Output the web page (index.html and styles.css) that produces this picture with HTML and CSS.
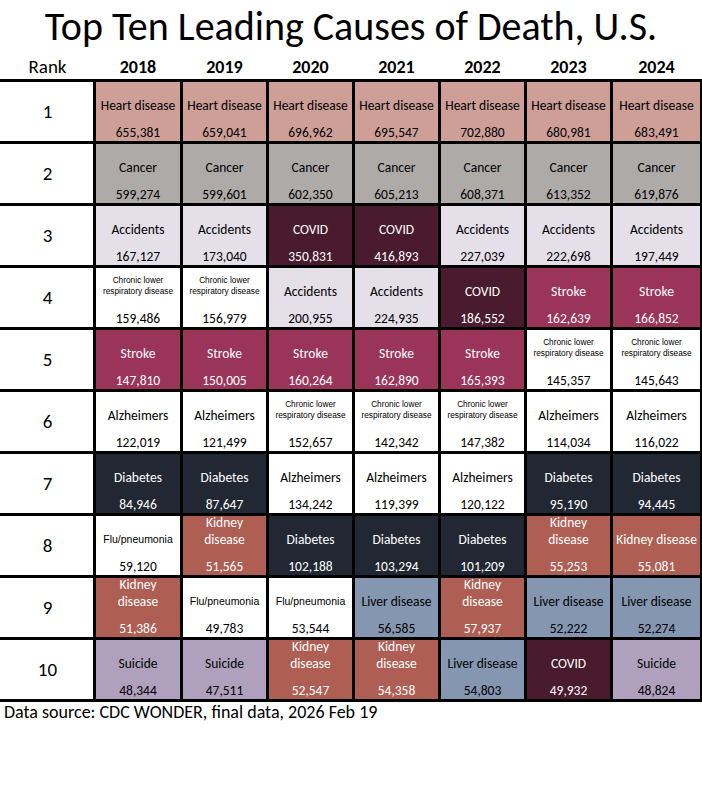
FILE: index.html
```html
<!DOCTYPE html>
<html lang="en">
<head>
<meta charset="utf-8">
<title>Top Ten Leading Causes of Death, U.S.</title>
<link rel="stylesheet" href="styles.css">
</head>
<body>
<div class="page">
  <h1 class="title">Top Ten Leading Causes of Death, U.S.</h1>
  <div class="head">
    <div class="rank-h">Rank</div>
    <div class="year">2018</div>
    <div class="year">2019</div>
    <div class="year">2020</div>
    <div class="year">2021</div>
    <div class="year">2022</div>
    <div class="year">2023</div>
    <div class="year">2024</div>
  </div>
  <div class="grid">
    <!-- 1 -->
    <div class="rank">1</div>
    <div class="cell heart"><div class="name">Heart disease</div><div class="num">655,381</div></div>
    <div class="cell heart"><div class="name">Heart disease</div><div class="num">659,041</div></div>
    <div class="cell heart"><div class="name">Heart disease</div><div class="num">696,962</div></div>
    <div class="cell heart"><div class="name">Heart disease</div><div class="num">695,547</div></div>
    <div class="cell heart"><div class="name">Heart disease</div><div class="num">702,880</div></div>
    <div class="cell heart"><div class="name">Heart disease</div><div class="num">680,981</div></div>
    <div class="cell heart"><div class="name">Heart disease</div><div class="num">683,491</div></div>
    <!-- 2 -->
    <div class="rank">2</div>
    <div class="cell cancer"><div class="name">Cancer</div><div class="num">599,274</div></div>
    <div class="cell cancer"><div class="name">Cancer</div><div class="num">599,601</div></div>
    <div class="cell cancer"><div class="name">Cancer</div><div class="num">602,350</div></div>
    <div class="cell cancer"><div class="name">Cancer</div><div class="num">605,213</div></div>
    <div class="cell cancer"><div class="name">Cancer</div><div class="num">608,371</div></div>
    <div class="cell cancer"><div class="name">Cancer</div><div class="num">613,352</div></div>
    <div class="cell cancer"><div class="name">Cancer</div><div class="num">619,876</div></div>
    <!-- 3 -->
    <div class="rank">3</div>
    <div class="cell accidents"><div class="name">Accidents</div><div class="num">167,127</div></div>
    <div class="cell accidents"><div class="name">Accidents</div><div class="num">173,040</div></div>
    <div class="cell covid"><div class="name">COVID</div><div class="num">350,831</div></div>
    <div class="cell covid"><div class="name">COVID</div><div class="num">416,893</div></div>
    <div class="cell accidents"><div class="name">Accidents</div><div class="num">227,039</div></div>
    <div class="cell accidents"><div class="name">Accidents</div><div class="num">222,698</div></div>
    <div class="cell accidents"><div class="name">Accidents</div><div class="num">197,449</div></div>
    <!-- 4 -->
    <div class="rank">4</div>
    <div class="cell plain"><div class="name small">Chronic lower<br>respiratory disease</div><div class="num">159,486</div></div>
    <div class="cell plain"><div class="name small">Chronic lower<br>respiratory disease</div><div class="num">156,979</div></div>
    <div class="cell accidents"><div class="name">Accidents</div><div class="num">200,955</div></div>
    <div class="cell accidents"><div class="name">Accidents</div><div class="num">224,935</div></div>
    <div class="cell covid"><div class="name">COVID</div><div class="num">186,552</div></div>
    <div class="cell stroke"><div class="name">Stroke</div><div class="num">162,639</div></div>
    <div class="cell stroke"><div class="name">Stroke</div><div class="num">166,852</div></div>
    <!-- 5 -->
    <div class="rank">5</div>
    <div class="cell stroke"><div class="name">Stroke</div><div class="num">147,810</div></div>
    <div class="cell stroke"><div class="name">Stroke</div><div class="num">150,005</div></div>
    <div class="cell stroke"><div class="name">Stroke</div><div class="num">160,264</div></div>
    <div class="cell stroke"><div class="name">Stroke</div><div class="num">162,890</div></div>
    <div class="cell stroke"><div class="name">Stroke</div><div class="num">165,393</div></div>
    <div class="cell plain"><div class="name small">Chronic lower<br>respiratory disease</div><div class="num">145,357</div></div>
    <div class="cell plain"><div class="name small">Chronic lower<br>respiratory disease</div><div class="num">145,643</div></div>
    <!-- 6 -->
    <div class="rank">6</div>
    <div class="cell plain"><div class="name">Alzheimers</div><div class="num">122,019</div></div>
    <div class="cell plain"><div class="name">Alzheimers</div><div class="num">121,499</div></div>
    <div class="cell plain"><div class="name small">Chronic lower<br>respiratory disease</div><div class="num">152,657</div></div>
    <div class="cell plain"><div class="name small">Chronic lower<br>respiratory disease</div><div class="num">142,342</div></div>
    <div class="cell plain"><div class="name small">Chronic lower<br>respiratory disease</div><div class="num">147,382</div></div>
    <div class="cell plain"><div class="name">Alzheimers</div><div class="num">114,034</div></div>
    <div class="cell plain"><div class="name">Alzheimers</div><div class="num">116,022</div></div>
    <!-- 7 -->
    <div class="rank">7</div>
    <div class="cell diabetes"><div class="name">Diabetes</div><div class="num">84,946</div></div>
    <div class="cell diabetes"><div class="name">Diabetes</div><div class="num">87,647</div></div>
    <div class="cell plain"><div class="name">Alzheimers</div><div class="num">134,242</div></div>
    <div class="cell plain"><div class="name">Alzheimers</div><div class="num">119,399</div></div>
    <div class="cell plain"><div class="name">Alzheimers</div><div class="num">120,122</div></div>
    <div class="cell diabetes"><div class="name">Diabetes</div><div class="num">95,190</div></div>
    <div class="cell diabetes"><div class="name">Diabetes</div><div class="num">94,445</div></div>
    <!-- 8 -->
    <div class="rank">8</div>
    <div class="cell plain"><div class="name flu">Flu/pneumonia</div><div class="num">59,120</div></div>
    <div class="cell kidney"><div class="name">Kidney<br>disease</div><div class="num">51,565</div></div>
    <div class="cell diabetes"><div class="name">Diabetes</div><div class="num">102,188</div></div>
    <div class="cell diabetes"><div class="name">Diabetes</div><div class="num">103,294</div></div>
    <div class="cell diabetes"><div class="name">Diabetes</div><div class="num">101,209</div></div>
    <div class="cell kidney"><div class="name">Kidney<br>disease</div><div class="num">55,253</div></div>
    <div class="cell kidney"><div class="name">Kidney disease</div><div class="num">55,081</div></div>
    <!-- 9 -->
    <div class="rank">9</div>
    <div class="cell kidney"><div class="name">Kidney<br>disease</div><div class="num">51,386</div></div>
    <div class="cell plain"><div class="name flu">Flu/pneumonia</div><div class="num">49,783</div></div>
    <div class="cell plain"><div class="name flu">Flu/pneumonia</div><div class="num">53,544</div></div>
    <div class="cell liver"><div class="name">Liver disease</div><div class="num">56,585</div></div>
    <div class="cell kidney"><div class="name">Kidney<br>disease</div><div class="num">57,937</div></div>
    <div class="cell liver"><div class="name">Liver disease</div><div class="num">52,222</div></div>
    <div class="cell liver"><div class="name">Liver disease</div><div class="num">52,274</div></div>
    <!-- 10 -->
    <div class="rank">10</div>
    <div class="cell suicide"><div class="name">Suicide</div><div class="num">48,344</div></div>
    <div class="cell suicide"><div class="name">Suicide</div><div class="num">47,511</div></div>
    <div class="cell kidney"><div class="name">Kidney<br>disease</div><div class="num">52,547</div></div>
    <div class="cell kidney"><div class="name">Kidney<br>disease</div><div class="num">54,358</div></div>
    <div class="cell liver"><div class="name">Liver disease</div><div class="num">54,803</div></div>
    <div class="cell covid"><div class="name">COVID</div><div class="num">49,932</div></div>
    <div class="cell suicide"><div class="name">Suicide</div><div class="num">48,824</div></div>
  </div>
  <p class="source">Data source: CDC WONDER, final data, 2026 Feb 19</p>
</div>
</body>
</html>
```

FILE: styles.css
```css
html, body {
  margin: 0;
  padding: 0;
  background: #ffffff;
}

body {
  font-family: Carlito, Calibri, Lato, "Noto Sans", sans-serif;
  color: #000000;
}

.page {
  width: 702px;
}

.title {
  margin: 0;
  padding-top: 1px;
  height: 53px;
  line-height: 52px;
  font-size: 40px;
  font-weight: 400;
  text-align: center;
  white-space: nowrap;
}

.head,
.grid {
  display: grid;
  grid-template-columns: 93px 84px 83px 83px 83px 83px 83px 87px;
  column-gap: 3px;
}

.head {
  height: 25px;
  align-items: center;
  padding-right: 2px;
}

.rank-h {
  text-align: center;
  font-size: 19px;
  padding-left: 2px;
}

.year {
  text-align: center;
  font-size: 18px;
  font-weight: 700;
}

.grid {
  grid-auto-rows: 59px;
  row-gap: 3px;
  background: #000000;
  border-top: 3px solid #000000;
  border-bottom: 3px solid #000000;
  padding-right: 2px;
}

.rank {
  background: #ffffff;
  display: flex;
  align-items: center;
  justify-content: center;
  font-size: 19px;
  padding-left: 2px;
}

.cell {
  display: flex;
  flex-direction: column;
  align-items: center;
  text-align: center;
  font-size: 13.5px;
  color: #000000;
}

.name {
  height: 32px;
  display: flex;
  flex-direction: column;
  justify-content: flex-end;
  line-height: 17px;
  white-space: nowrap;
}

.name.small {
  font-family: "Liberation Sans", Arial, sans-serif;
  font-size: 8.3px;
  line-height: 11px;
  padding-bottom: 3px;
  height: 29px;
}

.name.flu {
  font-family: "Liberation Sans", Arial, sans-serif;
  font-size: 10.5px;
}

.num {
  margin-top: 10px;
  line-height: 17px;
}

.plain { background: #ffffff; }
.heart { background: #cd9f97; }
.cancer { background: #aeaaa8; }
.accidents { background: #e5dfea; }
.covid { background: #4a1a2e; color: #ffffff; }
.stroke { background: #9a3459; color: #ffffff; }
.diabetes { background: #222833; color: #ffffff; }
.kidney { background: #ae5e52; color: #ffffff; }
.liver { background: #8496b0; }
.suicide { background: #afa0be; }

.source {
  margin: 0;
  padding-left: 4px;
  line-height: 20px;
  font-size: 18px;
}
```
